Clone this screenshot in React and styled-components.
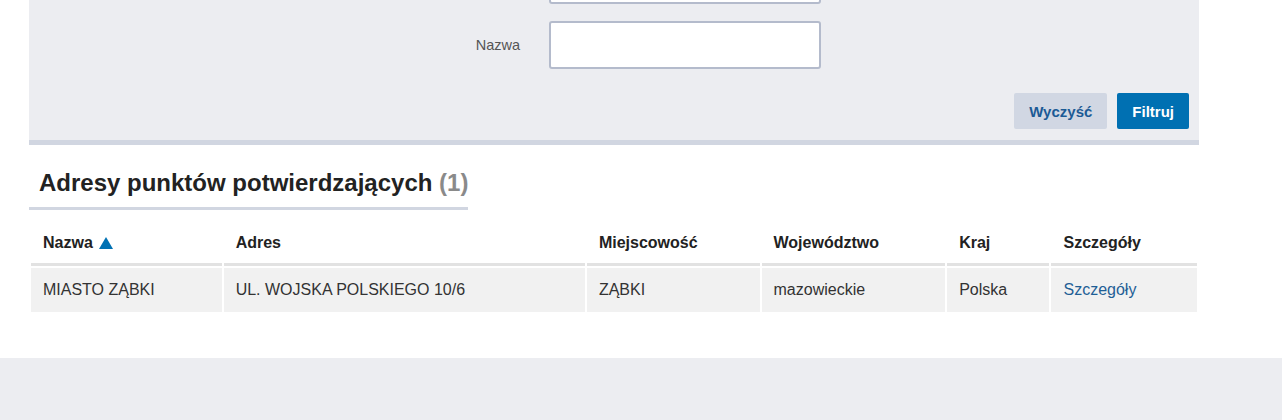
import React from 'react'
import styled, { createGlobalStyle } from 'styled-components'

const GlobalStyle = createGlobalStyle`
  html, body {
    margin: 0;
    padding: 0;
    background: #ffffff;
    font-family: "Liberation Sans", Arial, sans-serif;
    color: #222;
  }
`

const Page = styled.div`
  height: 420px;
  overflow: hidden;
  display: flex;
  flex-direction: column;
`

const FilterPanel = styled.div`
  width: 1170px;
  margin: -44px 0 0 29px;
  background: #ecedf1;
  border-bottom: 5px solid #d1d6e1;
  padding-bottom: 11px;
`

const FieldRow = styled.div`
  display: grid;
  grid-template-columns: 491px 272px;
  column-gap: 29px;
  align-items: center;
  margin-bottom: 17px;
`

const Label = styled.label`
  text-align: right;
  font-size: 14.5px;
  color: #555;
`

const Input = styled.input`
  box-sizing: border-box;
  height: 48px;
  width: 272px;
  border: 2px solid #b4bbcc;
  border-radius: 3px;
  background: #fff;
  outline: none;
`

const Actions = styled.div`
  display: flex;
  justify-content: flex-end;
  gap: 10px;
  padding-right: 10px;
  margin-top: 24px;
`

const Button = styled.button`
  height: 36px;
  padding: 0 15px;
  border: none;
  border-radius: 2px;
  font-family: inherit;
  font-size: 15px;
  font-weight: bold;
  background: ${(p) => (p.primary ? '#0070b2' : '#d1d7e3')};
  color: ${(p) => (p.primary ? '#ffffff' : '#1b5a95')};
`

const Content = styled.section`
  width: 1170px;
  margin-left: 29px;
  padding-top: 24px;
  height: 189px;
`

const Heading = styled.h2`
  display: inline-block;
  margin: 0;
  padding: 0 0 10px 10px;
  font-size: 24px;
  line-height: 28px;
  font-weight: bold;
  color: #222;
  border-bottom: 3px solid #d1d6e1;
`

const Count = styled.span`
  color: #8a8a8a;
`

const Table = styled.table`
  width: 100%;
  margin-top: 11px;
  border-collapse: separate;
  border-spacing: 2px;
  font-size: 16px;
`

const Th = styled.th`
  width: ${(p) => p.w}px;
  text-align: left;
  padding: 10px 12px;
  line-height: 20px;
  font-weight: bold;
  color: #222;
  border-bottom: 3px solid #e2e2e2;
`

const Td = styled.td`
  padding: 12px 12px;
  line-height: 20px;
  background: #f1f1f1;
  color: #333;
`

const Link = styled.a`
  color: #1f5f96;
  text-decoration: none;
`

const SortArrow = styled.svg`
  margin-left: 6px;
  vertical-align: -1px;
`

const Footer = styled.footer`
  flex: 1;
  background: #ecedf1;
`

const columns = [
  { title: 'Nazwa', w: 166, sorted: true },
  { title: 'Adres', w: 336 },
  { title: 'Miejscowość', w: 148 },
  { title: 'Województwo', w: 159 },
  { title: 'Kraj', w: 78 },
  { title: 'Szczegóły', w: 121 },
]

export default function App() {
  return (
    <Page>
      <GlobalStyle />
      <FilterPanel>
        <FieldRow>
          <Label />
          <Input />
        </FieldRow>
        <FieldRow>
          <Label>Nazwa</Label>
          <Input />
        </FieldRow>
        <Actions>
          <Button>Wyczyść</Button>
          <Button primary>Filtruj</Button>
        </Actions>
      </FilterPanel>
      <Content>
        <Heading>
          Adresy punktów potwierdzających <Count>(1)</Count>
        </Heading>
        <Table>
          <thead>
            <tr>
              {columns.map((c) => (
                <Th key={c.title} w={c.w}>
                  {c.title}
                  {c.sorted && (
                    <SortArrow width="14" height="12" viewBox="0 0 14 12">
                      <path d="M7 0 L14 12 L0 12 Z" fill="#0071b3" />
                    </SortArrow>
                  )}
                </Th>
              ))}
            </tr>
          </thead>
          <tbody>
            <tr>
              <Td>MIASTO ZĄBKI</Td>
              <Td>UL. WOJSKA POLSKIEGO 10/6</Td>
              <Td>ZĄBKI</Td>
              <Td>mazowieckie</Td>
              <Td>Polska</Td>
              <Td>
                <Link href="#">Szczegóły</Link>
              </Td>
            </tr>
          </tbody>
        </Table>
      </Content>
      <Footer />
    </Page>
  )
}
